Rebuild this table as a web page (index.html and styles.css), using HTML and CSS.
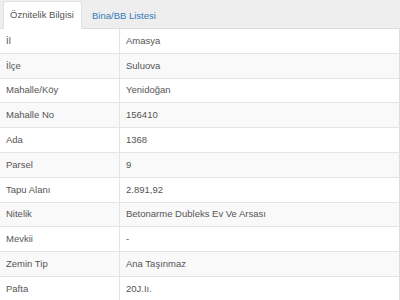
FILE: index.html
```html
<!DOCTYPE html>
<html lang="tr">
<head>
<meta charset="utf-8">
<link rel="stylesheet" href="styles.css">
</head>
<body>
<div class="tabs">
  <div class="tab active">Öznitelik Bilgisi</div>
  <div class="tab">Bina/BB Listesi</div>
</div>
<table class="props">
  <tr><td>İl</td><td>Amasya</td></tr>
  <tr><td>İlçe</td><td>Suluova</td></tr>
  <tr><td>Mahalle/Köy</td><td>Yenidoğan</td></tr>
  <tr><td>Mahalle No</td><td>156410</td></tr>
  <tr><td>Ada</td><td>1368</td></tr>
  <tr><td>Parsel</td><td>9</td></tr>
  <tr><td>Tapu Alanı</td><td>2.891,92</td></tr>
  <tr><td>Nitelik</td><td>Betonarme Dubleks Ev Ve Arsası</td></tr>
  <tr><td>Mevkii</td><td>-</td></tr>
  <tr><td>Zemin Tip</td><td>Ana Taşınmaz</td></tr>
  <tr><td>Pafta</td><td>20J.Iı.</td></tr>
</table>
</body>
</html>
```
FILE: styles.css
```css
html, body {
  margin: 0;
  padding: 0;
  background: #fff;
  font-family: "Liberation Sans", Arial, sans-serif;
  font-size: 9.5px;
  color: #555;
}
.tabs {
  display: flex;
  align-items: flex-end;
  height: 28px;
  background: #eee;
  border-bottom: 1px solid #ddd;
  padding-left: 3px;
}
.tab {
  height: 26px;
  line-height: 25px;
  padding: 0 7px;
  color: #337ab7;
  margin-bottom: -1px;
}
.tab.active {
  background: #fff;
  color: #555;
  border: 1px solid #e2e2e2;
  border-bottom: 1px solid #fff;
  border-radius: 3px 3px 0 0;
  padding: 0 6px;
  margin-right: 3px;
  width: 65px;
}
.props {
  width: 400px;
  border-collapse: collapse;
  table-layout: fixed;
}
.props td {
  height: 23.8px;
  line-height: 12px;
  padding: 0 6px;
  border-bottom: 1px solid #e4e4e4;
  vertical-align: middle;
  white-space: nowrap;
}
.props td:first-child {
  width: 107px;
  border-right: 1px solid #e4e4e4;
}
.props td:last-child {
  border-right: 1px solid #ddd;
}
.props tr:nth-child(even) td {
  background: #f9f9f9;
}
```
